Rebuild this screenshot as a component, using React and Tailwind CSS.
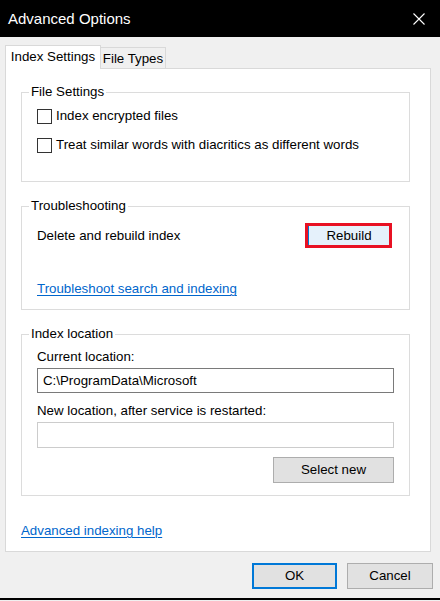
import React from "react";

function GroupBox({ title, className = "", children }) {
  return (
    <div className={`relative border border-[#dcdcdc] ${className}`}>
      <span className="absolute -top-[9px] left-[7px] bg-white px-[2px] leading-[16px] text-black">
        {title}
      </span>
      {children}
    </div>
  );
}

function CheckRow({ label }) {
  return (
    <div className="flex items-center">
      <div className="w-[15px] h-[15px] border border-[#333333] bg-white shrink-0" />
      <span className="ml-[4px] leading-[16px]">{label}</span>
    </div>
  );
}

export default function App() {
  return (
    <div
      className="w-[440px] h-[601px] bg-[#f0f0f0] flex flex-col text-[13.3px] text-black overflow-hidden"
      style={{ fontFamily: '"Liberation Sans", Arial, sans-serif' }}
    >
      {/* Title bar */}
      <div className="h-[37px] bg-black flex items-center justify-between pl-[8px] pr-[15px] shrink-0">
        <span className="text-white text-[15px] leading-[18px] pt-px">Advanced Options</span>
        <svg width="12" height="12" viewBox="0 0 12 12" className="block">
          <path d="M0.5 0.5 L11.5 11.5 M11.5 0.5 L0.5 11.5" stroke="#ffffff" strokeWidth="1.1" fill="none" />
        </svg>
      </div>

      {/* Tabs */}
      <div className="mt-[8px] flex items-end pl-[5px] h-[23px] shrink-0">
        <div className="relative z-10 w-[96px] h-[24px] -mb-px bg-white border border-b-0 border-[#d9d9d9] flex items-center justify-center leading-[16px] pb-[1px]">
          Index Settings
        </div>
        <div className="w-[66px] h-[21px] -ml-px bg-[#f0f0f0] border border-b-0 border-[#d9d9d9] flex items-center justify-center leading-[16px] pt-[2px]">
          File Types
        </div>
      </div>

      {/* Panel */}
      <div className="ml-[5px] w-[426px] h-[484px] bg-white border border-[#d9d9d9] pl-[15px] pt-[23px] flex flex-col shrink-0">
        <div className="w-[389px] flex flex-col gap-[24px]">
          <GroupBox title="File Settings" className="h-[90px] pl-[15px] pt-[15px]">
            <div className="flex flex-col gap-[13px]">
              <CheckRow label="Index encrypted files" />
              <CheckRow label="Treat similar words with diacritics as different words" />
            </div>
          </GroupBox>

          <GroupBox title="Troubleshooting" className="h-[104px] pl-[15px] pr-[17px] pt-[16px]">
            <div className="flex items-center justify-between">
              <span className="leading-[16px]">Delete and rebuild index</span>
              <div className="w-[87px] h-[25px] border-[3px] border-[#e81123] flex">
                <div className="flex-1 bg-[#e5f1fb] border-l border-[#0078d7] flex items-center justify-center leading-[16px]">
                  Rebuild
                </div>
              </div>
            </div>
            <div className="mt-[33px] leading-[16px]">
              <span className="text-[#0066cc] underline underline-offset-[2px] decoration-[1px]">
                Troubleshoot search and indexing
              </span>
            </div>
          </GroupBox>

          <GroupBox title="Index location" className="h-[162px] px-[15px] pt-[14px]">
            <div className="leading-[16px]">Current location:</div>
            <div className="mt-[3px] h-[25px] border border-[#7a7a7a] bg-white flex items-center pl-[5px] leading-[16px]">
              C:\ProgramData\Microsoft
            </div>
            <div className="mt-[10px] leading-[16px]">New location, after service is restarted:</div>
            <div className="mt-[3px] h-[26px] border border-[#cccccc] bg-white" />
            <div className="mt-[9px] flex justify-end">
              <div className="w-[121px] h-[26px] bg-[#e1e1e1] border border-[#adadad] flex items-center justify-center leading-[16px]">
                Select new
              </div>
            </div>
          </GroupBox>
        </div>

        <div className="mt-[27px] leading-[16px]">
          <span className="text-[#0066cc] underline underline-offset-[2px] decoration-[1px]">
            Advanced indexing help
          </span>
        </div>
      </div>

      {/* Bottom buttons */}
      <div className="mt-[11px] flex justify-end pr-[7px] gap-[10px] shrink-0">
        <div className="w-[85px] h-[26px] bg-[#e1e1e1] border-2 border-[#0078d7] flex items-center justify-center leading-[16px]">
          OK
        </div>
        <div className="w-[86px] h-[26px] bg-[#e1e1e1] border border-[#adadad] flex items-center justify-center leading-[16px]">
          Cancel
        </div>
      </div>

      <div className="mt-[9px] h-[2px] bg-black shrink-0" />
    </div>
  );
}
